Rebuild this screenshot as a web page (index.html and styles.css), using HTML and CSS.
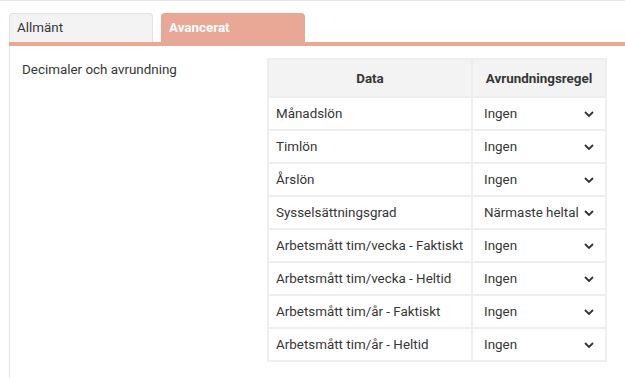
FILE: index.html
```html
<!DOCTYPE html>
<html lang="sv">
<head>
    <meta charset="UTF-8">
    <meta name="viewport" content="width=device-width, initial-scale=1.0">
    <title>Inställningar</title>
    <link rel="stylesheet" href="styles.css">
</head>
<body>
    <div class="page">
        <div class="tabs">
            <div class="tab">Allmänt</div>
            <div class="tab active">Avancerat</div>
        </div>
        <div class="tab-bar"></div>

        <div class="panel">
            <div class="label">Decimaler och avrundning</div>
            <table class="rounding">
                <colgroup>
                    <col class="col-data">
                    <col class="col-rule">
                </colgroup>
                <thead>
                    <tr>
                        <th>Data</th>
                        <th>Avrundningsregel</th>
                    </tr>
                </thead>
                <tbody>
                    <tr><td>Månadslön</td><td><div class="select">Ingen<svg class="chev" viewBox="0 0 10 6"><path d="M1 1l4 4 4-4"/></svg></div></td></tr>
                    <tr><td>Timlön</td><td><div class="select">Ingen<svg class="chev" viewBox="0 0 10 6"><path d="M1 1l4 4 4-4"/></svg></div></td></tr>
                    <tr><td>Årslön</td><td><div class="select">Ingen<svg class="chev" viewBox="0 0 10 6"><path d="M1 1l4 4 4-4"/></svg></div></td></tr>
                    <tr><td>Sysselsättningsgrad</td><td><div class="select">Närmaste heltal<svg class="chev" viewBox="0 0 10 6"><path d="M1 1l4 4 4-4"/></svg></div></td></tr>
                    <tr><td>Arbetsmått tim/vecka - Faktiskt</td><td><div class="select">Ingen<svg class="chev" viewBox="0 0 10 6"><path d="M1 1l4 4 4-4"/></svg></div></td></tr>
                    <tr><td>Arbetsmått tim/vecka - Heltid</td><td><div class="select">Ingen<svg class="chev" viewBox="0 0 10 6"><path d="M1 1l4 4 4-4"/></svg></div></td></tr>
                    <tr><td>Arbetsmått tim/år - Faktiskt</td><td><div class="select">Ingen<svg class="chev" viewBox="0 0 10 6"><path d="M1 1l4 4 4-4"/></svg></div></td></tr>
                    <tr><td>Arbetsmått tim/år - Heltid</td><td><div class="select">Ingen<svg class="chev" viewBox="0 0 10 6"><path d="M1 1l4 4 4-4"/></svg></div></td></tr>
                </tbody>
            </table>
        </div>
    </div>
</body>
</html>
```

FILE: styles.css
```css
body {
    margin: 0;
    font-family: Roboto, "Liberation Sans", Arial, sans-serif;
    font-size: 13.4px;
    color: #363636;
    background-color: #fff;
}
.page {
    border-top: 1px solid #e6e6e6;
    height: 377px;
}
.tabs {
    display: flex;
    gap: 8px;
    margin: 12px 0 0 9px;
}
.tab {
    box-sizing: border-box;
    width: 144px;
    height: 29px;
    padding: 6px 7px 0;
    background-color: #f3f3f3;
    border: 1px solid #e2e2e2;
    border-bottom: none;
    border-radius: 4px 4px 0 0;
}
.tab.active {
    background-color: #e9a795;
    border-color: #e9a795;
    color: #fff;
    font-weight: bold;
}
.tab-bar {
    height: 4px;
    margin-left: 9px;
    background-color: #e9a795;
}
/* content panel */
.panel {
    display: flex;
    margin-left: 9px;
    padding: 12px 0 16px 12px;
    border-left: 1px solid #e6e6e6;
}
.label {
    width: 245px;
    padding-top: 4px;
}
.rounding {
    width: 340px;
    table-layout: fixed;
    border-collapse: collapse;
    border: 2px solid #eeeeee;
}
.col-data {
    width: 204px;
}
.rounding th,
.rounding td {
    border: 2px solid #eeeeee;
    height: 31px;
    padding: 0 7px;
    text-align: left;
    white-space: nowrap;
    overflow: hidden;
}
.rounding th {
    height: 36px;
    background-color: #f3f3f3;
    text-align: center;
    font-weight: bold;
}
.select {
    display: flex;
    align-items: center;
    justify-content: space-between;
    padding: 0 4px 0 4px;
}
.chev {
    width: 10px;
    height: 6px;
    flex: none;
    fill: none;
    stroke: #333;
    stroke-width: 1.8;
}
```
